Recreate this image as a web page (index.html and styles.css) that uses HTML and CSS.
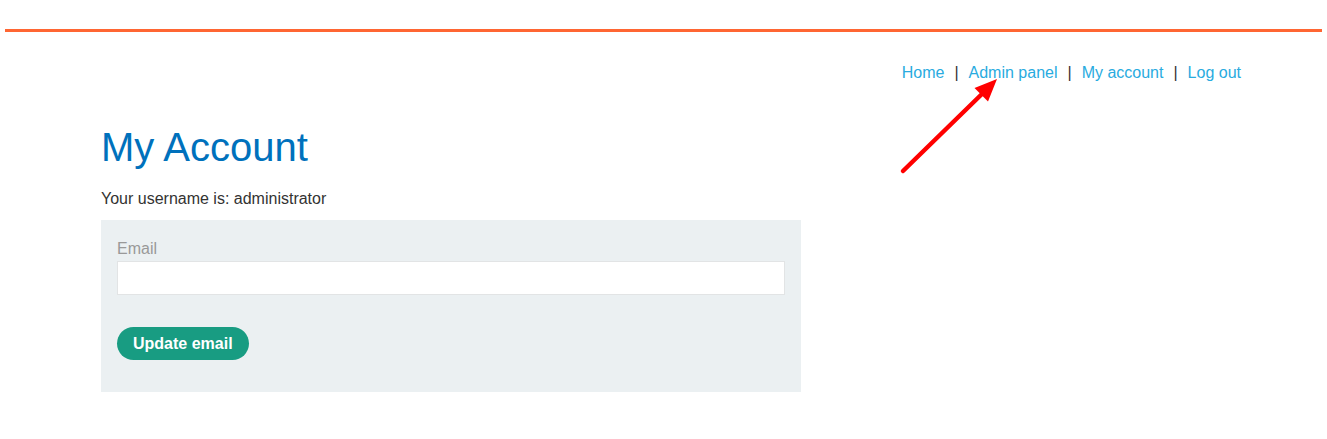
FILE: index.html
```html
<!DOCTYPE html>
<html>
<head>
<meta charset="utf-8">
<link rel="stylesheet" href="styles.css">
</head>
<body>
<div class="page">
  <div class="topline"></div>
  <div class="content">
    <nav class="nav">
      <a href="#">Home</a><span class="sep">|</span>
      <a href="#">Admin panel</a><span class="sep">|</span>
      <a href="#">My account</a><span class="sep">|</span>
      <a href="#">Log out</a>
    </nav>
    <h1 class="title">My Account</h1>
    <p class="user">Your username is: administrator</p>
    <form class="panel">
      <label class="label">Email</label>
      <input class="input" type="email">
      <button class="btn" type="button">Update email</button>
    </form>
  </div>
</div>
<svg class="arrow" width="1327" height="439" viewBox="0 0 1327 439">
  <line x1="903" y1="171" x2="984" y2="92" stroke="#ff0000" stroke-width="4.5" stroke-linecap="round"/>
  <polygon points="997,79 988,101.5 974.5,88" fill="#ff0000"/>
</svg>
</body>
</html>
```

FILE: styles.css
```css
html, body {
  margin: 0;
  padding: 0;
  background: #fff;
}
body {
  font-family: "Liberation Sans", Arial, sans-serif;
  font-size: 16px;
  color: #333332;
}
.page {
  padding: 29px 5px 0;
}
.topline {
  height: 3px;
  background: #ff6633;
}
.content {
  padding: 0 81px 0 96px;
}
.nav {
  display: flex;
  justify-content: flex-end;
  align-items: center;
  margin-top: 30px;
  height: 22px;
  line-height: 22px;
}
.nav a {
  color: #29abe0;
  text-decoration: none;
}
.sep {
  color: #333332;
  margin: 0 10px;
}
.title {
  margin: 39px 0 0;
  font-size: 40px;
  font-weight: normal;
  line-height: 48px;
  color: #0071bc;
}
.user {
  margin: 18px 0 0;
  line-height: 20px;
}
.panel {
  display: flex;
  flex-direction: column;
  align-items: flex-start;
  width: 668px;
  margin-top: 11px;
  padding: 19px 16px 32px;
  background: #ebf0f2;
}
.label {
  color: #999999;
  line-height: 20px;
  margin-bottom: 2px;
}
.input {
  box-sizing: border-box;
  width: 668px;
  height: 34px;
  margin: 0;
  border: 1px solid #e2e4e5;
  background: #fff;
  outline: none;
}
.btn {
  margin-top: 32px;
  height: 33px;
  padding: 0 16px;
  border: none;
  border-radius: 17px;
  background: #189c82;
  color: #fff;
  font-family: "Liberation Sans", Arial, sans-serif;
  font-size: 16px;
  font-weight: bold;
}
.arrow {
  position: absolute;
  left: 0;
  top: 0;
  pointer-events: none;
}
```
